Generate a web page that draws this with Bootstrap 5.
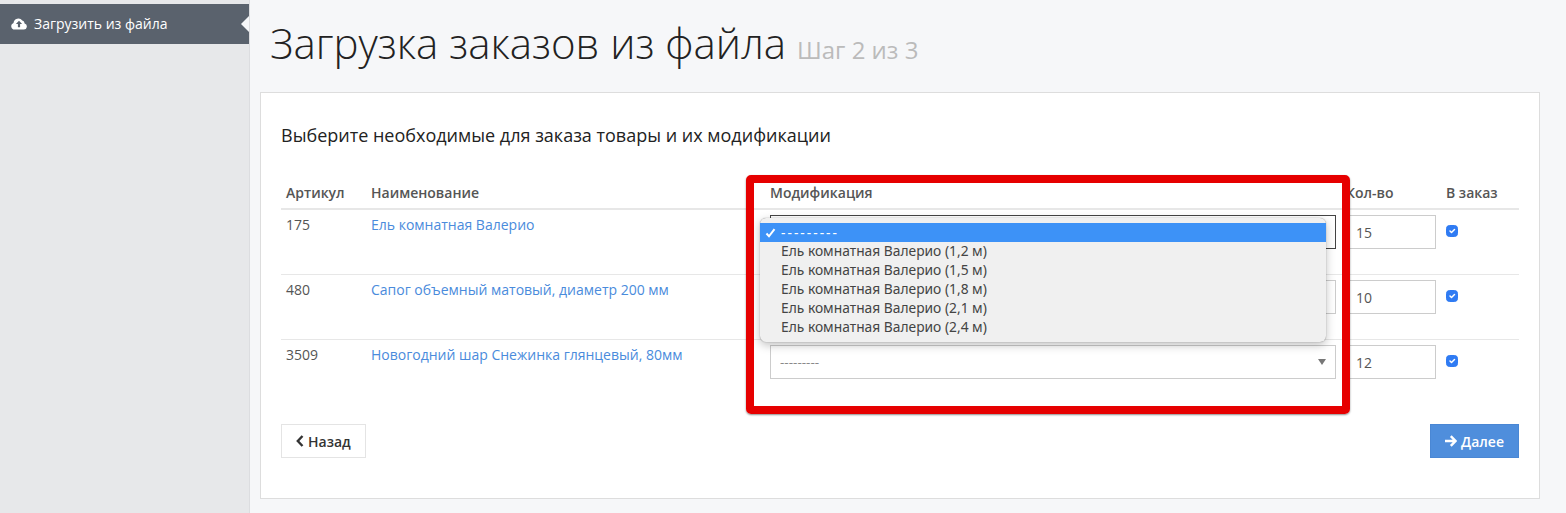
<!doctype html>
<html lang="ru">
<head>
<meta charset="UTF-8" />
<title>Загрузка заказов из файла</title>
<link href="https://cdn.jsdelivr.net/npm/bootstrap@5.3.0/dist/css/bootstrap.min.css" rel="stylesheet" />
<style>
html, body { height: 100%; }
body { font-family: "Open Sans", "Noto Sans", sans-serif; font-size: 14px; color: #555; background: #f6f7f9; overflow: hidden; }
.app-shell { height: 513px; position: relative; }
.side-col { width: 250px; flex: none; background: #e7e8ea; border-right: 1px solid #dcdde0; padding-top: 4px; }
.side-link { display: flex; align-items: center; gap: 7px; height: 40px; padding: 0 0 2px 11px; background: #5a626d; color: #fff; text-decoration: none; position: relative; }
.side-link::after { content: ""; position: absolute; right: 0; top: 12px; border: 8px solid transparent; border-right-color: #f6f7f9; border-left-width: 0; }
.main-col { padding: 0 26px 0 10px; flex: 1; min-width: 0; }
.page-title { font-weight: 300; font-size: 42px; line-height: 50px; color: #222; margin: 18px 0 24px 10px; white-space: nowrap; }
.page-title small { font-size: 24px; line-height: 1; font-weight: 400; color: #bbb; }
.panel-box { height: 407px; background: #fff; border: 1px solid #ddd; padding: 30px 20px 0; }
.panel-lead { font-size: 18px; line-height: 24px; color: #222; margin: 0 0 36px; white-space: nowrap; }
.order-table { table-layout: fixed; margin: 0 0 20px; width: 1238px; }
.order-table th { font-size: 14px; font-weight: 600; color: #555; padding: 0 5px 5px; line-height: 20px; border-bottom: 2px solid #e7e7e7; white-space: nowrap; }
.order-table td { padding: 5px; line-height: 20px; color: #555; border-bottom: 0; border-top: 1px solid #e7e7e7; vertical-align: top; }
.order-table tbody tr:first-child td { border-top: 0; }
.col-art { width: 85px; }
.col-name { width: 399px; }
.col-mod { width: 576px; }
.col-qty { width: 100px; }
.field-wrap { margin-bottom: 20px; }
.order-table a { color: #4a8bdc; text-decoration: none; }
.mod-select { height: 34px; border-radius: 0; border-color: #ccc; font-size: 13.500px; color: #888; padding: 0 20px 0 9px; background-size: 8px 6px; background-position: right 9px center; background-image: url("data:image/svg+xml,%3csvg xmlns='http://www.w3.org/2000/svg' viewBox='0 0 8 6'%3e%3cpath fill='%23777' d='M0 0h8L4 6z'/%3e%3c/svg%3e"); }
.mod-select.is-open { border-color: #444; }
.qty-input { width: 90px; height: 34px; border-radius: 0; border-color: #ccc; font-size: 14px; color: #555; padding: 0 9px; }
.order-check { width: 12px; height: 12px; margin: 10px 0 0; border-radius: 2px; }
.order-check:checked { background-color: #2f7bf3; border-color: #2f7bf3; }
.nav-btn { height: 34px; border-radius: 0; font-size: 14px; font-weight: 600; padding: 0 14px; display: inline-flex; align-items: center; gap: 4px; }
.btn-back { background: #fff; border-color: #e4e4e4; color: #333; }
.btn-next { background: #4f8edc; border-color: #4a87d4; color: #fff; }
.select-popup { display: block; position: absolute; left: 760px; top: 218px; width: 566px; height: 124px; min-width: 0; padding: 5px 0 0; border: 0; border-radius: 6px; background: #f0f0f0; box-shadow: 0 0 1px rgba(0,0,0,.5), 0 3px 10px rgba(0,0,0,.25); font-family: "Noto Sans", sans-serif; font-size: 13.800px; }
.select-popup .dropdown-item { height: 19px; line-height: 17px; padding: 0 0 0 21px; color: #444; position: relative; }
.select-popup .dropdown-item.active { background: #3d92f7; color: #fff; letter-spacing: 2px; line-height: 19px; }
.select-popup svg { position: absolute; left: 5px; top: 5px; }
.red-frame { position: absolute; left: 746px; top: 175px; width: 604px; height: 239px; border: 8px solid #e60000; border-radius: 5px; box-shadow: 0 1px 2px rgba(0,0,0,.45); pointer-events: none; }
</style>
</head>
<body>
<div class="app-shell d-flex">
  <aside class="side-col">
    <a class="side-link" href="#">
      <svg width="16" height="13" viewBox="0 0 16 13"><path fill="#fff" fill-rule="evenodd" d="M3.600 12.500A3.400 3.400 0 0 1 2.500 5.900 4.900 4.900 0 0 1 11.300 3.600a3.200 3.200 0 0 1 2.300 3A3 3 0 0 1 12.800 12.500zM8 3.800 4.900 7h2v3.300h2.200V7h2z"/></svg>
      <span>Загрузить из файла</span>
    </a>
  </aside>
  <main class="main-col">
    <h1 class="page-title">Загрузка заказов из файла <small>Шаг 2 из 3</small></h1>
    <section class="panel-box">
      <p class="panel-lead">Выберите необходимые для заказа товары и их модификации</p>
      <table class="table order-table">
        <thead>
          <tr>
            <th class="col-art">Артикул</th>
            <th class="col-name">Наименование</th>
            <th class="col-mod">Модификация</th>
            <th class="col-qty">Кол-во</th>
            <th>В заказ</th>
          </tr>
        </thead>
        <tbody>
          <tr>
            <td>175</td>
            <td><a href="#">Ель комнатная Валерио</a></td>
            <td><div class="field-wrap"><select class="form-select mod-select is-open"><option>---------</option></select></div></td>
            <td><input class="form-control qty-input" value="15" /></td>
            <td><input class="form-check-input order-check" type="checkbox" checked /></td>
          </tr>
          <tr>
            <td>480</td>
            <td><a href="#">Сапог объемный матовый, диаметр 200 мм</a></td>
            <td><div class="field-wrap"><select class="form-select mod-select"><option>---------</option></select></div></td>
            <td><input class="form-control qty-input" value="10" /></td>
            <td><input class="form-check-input order-check" type="checkbox" checked /></td>
          </tr>
          <tr>
            <td>3509</td>
            <td><a href="#">Новогодний шар Снежинка глянцевый, 80мм</a></td>
            <td><div class="field-wrap"><select class="form-select mod-select"><option>---------</option></select></div></td>
            <td><input class="form-control qty-input" value="12" /></td>
            <td><input class="form-check-input order-check" type="checkbox" checked /></td>
          </tr>
        </tbody>
      </table>
      <div class="d-flex justify-content-between">
        <button class="btn nav-btn btn-back" type="button">
          <svg width="8" height="12" viewBox="0 0 8 12"><path fill="none" stroke="#333" stroke-width="2.400" d="M6.500 1 1.800 6l4.700 5"/></svg>
          Назад
        </button>
        <button class="btn nav-btn btn-next" type="button">
          <svg width="12" height="12" viewBox="0 0 12 12"><path fill="none" stroke="#fff" stroke-width="2.400" d="M0 6h10M5.800 1.200 10.500 6l-4.700 4.800"/></svg>
          Далее
        </button>
      </div>
    </section>
  </main>
  <ul class="dropdown-menu select-popup list-unstyled">
    <li><a class="dropdown-item active" href="#"><svg width="11" height="10" viewBox="0 0 11 10"><path fill="none" stroke="#fff" stroke-width="2" d="M1.500 5.500 4 8.300 9.500 1.200"/></svg>---------</a></li>
    <li><a class="dropdown-item" href="#">Ель комнатная Валерио (1,2 м)</a></li>
    <li><a class="dropdown-item" href="#">Ель комнатная Валерио (1,5 м)</a></li>
    <li><a class="dropdown-item" href="#">Ель комнатная Валерио (1,8 м)</a></li>
    <li><a class="dropdown-item" href="#">Ель комнатная Валерио (2,1 м)</a></li>
    <li><a class="dropdown-item" href="#">Ель комнатная Валерио (2,4 м)</a></li>
  </ul>
  <div class="red-frame"></div>
</div>
<script src="https://cdn.jsdelivr.net/npm/bootstrap@5.3.0/dist/js/bootstrap.bundle.min.js"></script>
</body>
</html>
